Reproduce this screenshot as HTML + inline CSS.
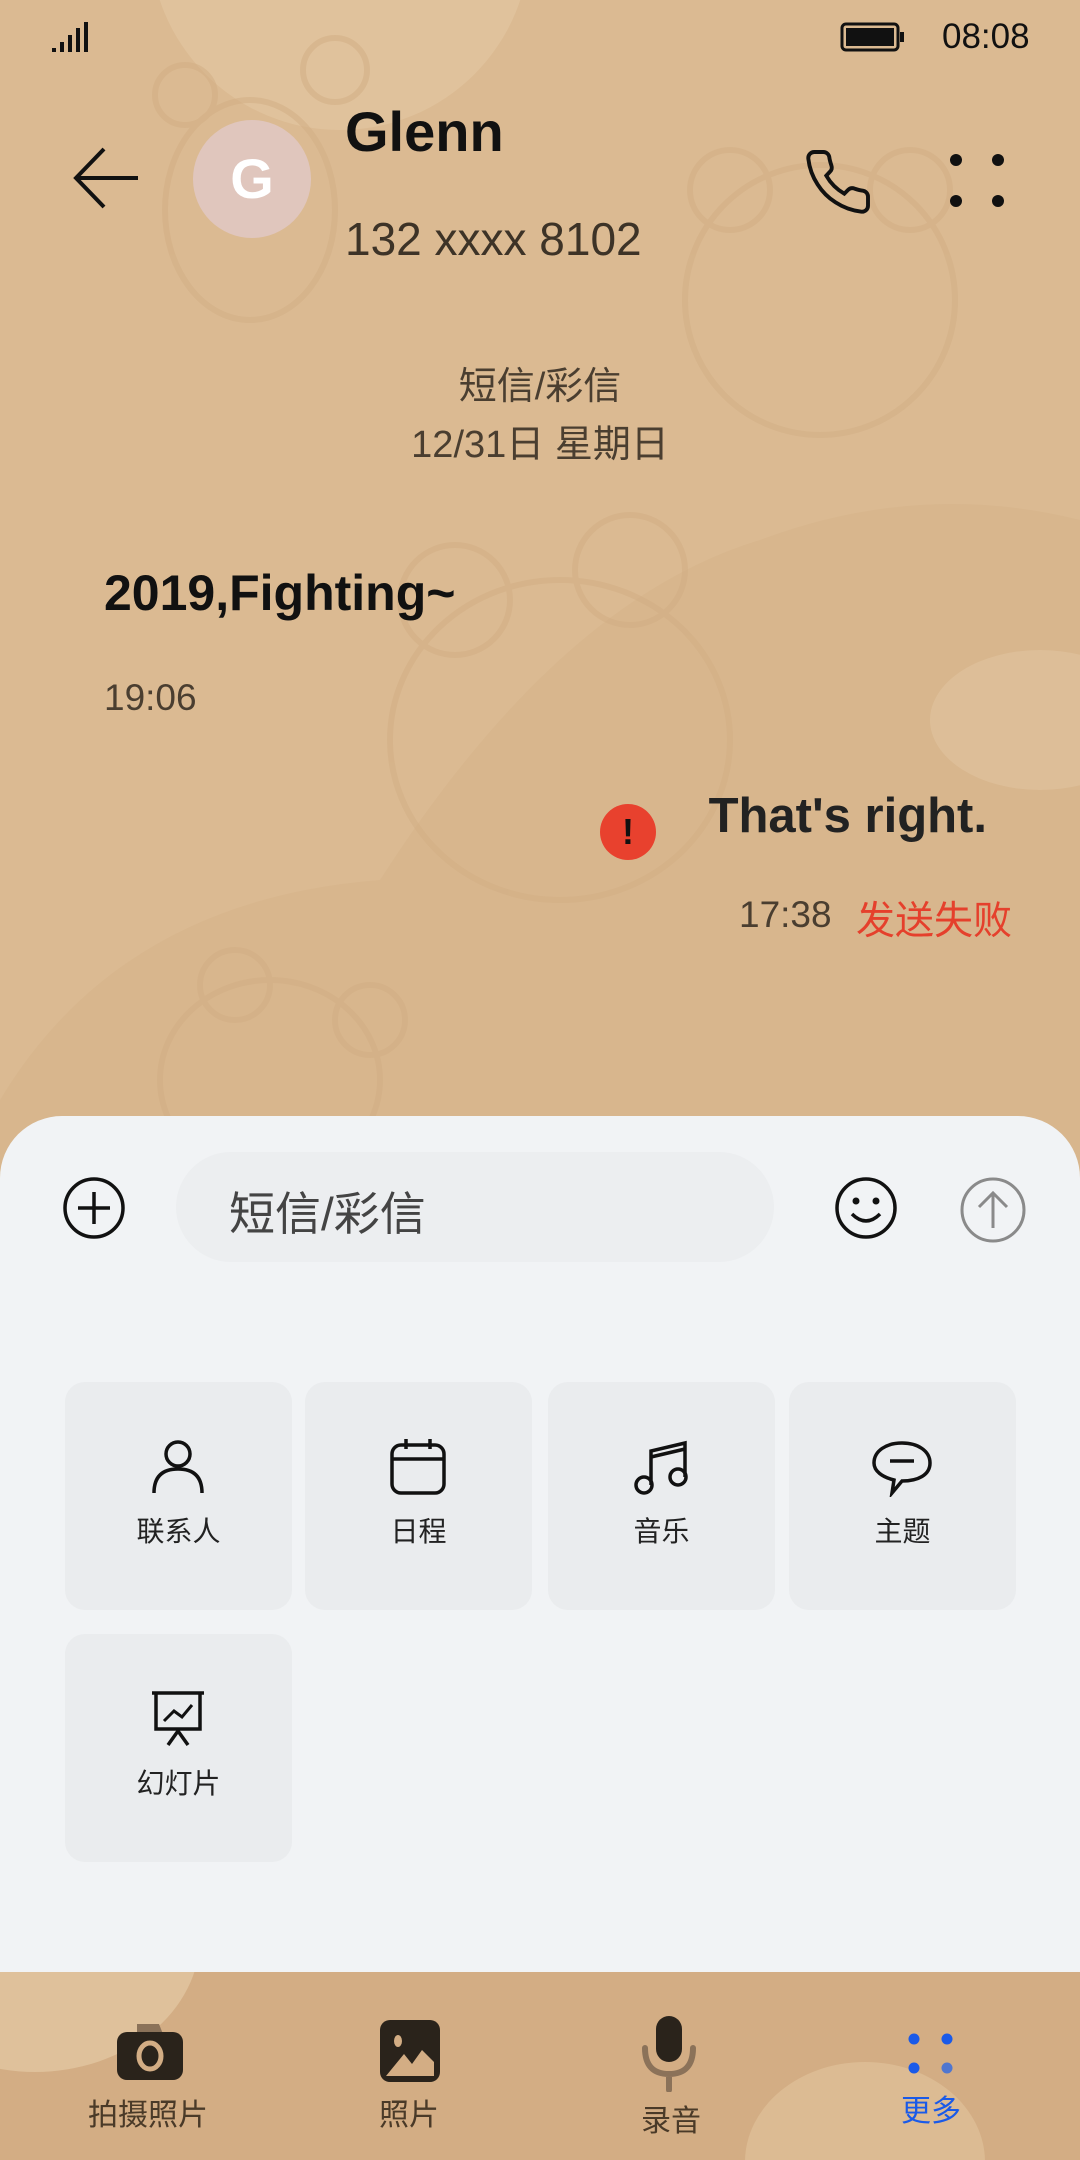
<!DOCTYPE html>
<html><head><meta charset="utf-8"><style>
*{margin:0;padding:0;box-sizing:border-box}
body{width:1080px;height:2160px;position:relative;overflow:hidden;background:#dbba92;font-family:"Liberation Sans","Noto Sans CJK SC",sans-serif;color:#111}
.a{position:absolute}
.t{position:absolute;white-space:nowrap}
.tile{position:absolute;width:227px;height:228px;background:#eaecee;border-radius:20px}
.tile span{position:absolute;left:0;right:0;top:128px;text-align:center;font-size:28px;color:#222}
.tile svg{position:absolute;left:83px;top:55px}
.bl{position:absolute;font-size:30px;color:#4a3a28;text-align:center;width:200px}
</style></head><body>
<svg class="a" style="left:0;top:0" width="1080" height="1200">
<circle cx="340" cy="-60" r="190" fill="#e0c29c"/>
<path d="M0 1100 Q120 900 380 880 Q560 600 760 540 Q920 480 1080 520 L1080 1200 L0 1200Z" fill="#d6b48a" opacity=".6"/>
<g fill="none" stroke="#d2ae84" stroke-width="6" opacity=".5">
<ellipse cx="250" cy="210" rx="85" ry="110"/><circle cx="185" cy="95" r="30"/><circle cx="335" cy="70" r="32"/>
<ellipse cx="820" cy="300" rx="135" ry="135"/><circle cx="730" cy="190" r="40"/><circle cx="910" cy="190" r="40"/>
<ellipse cx="560" cy="740" rx="170" ry="160"/><circle cx="455" cy="600" r="55"/><circle cx="630" cy="570" r="55"/>
<ellipse cx="270" cy="1080" rx="110" ry="100"/><circle cx="235" cy="985" r="35"/><circle cx="370" cy="1020" r="35"/>
</g>
<ellipse cx="1040" cy="720" rx="110" ry="70" fill="#e0c29c" opacity=".7"/>
</svg>
<!-- status -->
<svg class="a" style="left:52px;top:20px" width="40" height="34"><g fill="#111"><rect x="0" y="28" width="4" height="4"/><rect x="8" y="22" width="4" height="10"/><rect x="16" y="15" width="4" height="17"/><rect x="24" y="8" width="4" height="24"/><rect x="32" y="2" width="4" height="30"/></g></svg>
<svg class="a" style="left:840px;top:22px" width="66" height="30"><rect x="2" y="2" width="56" height="26" rx="4" fill="none" stroke="#111" stroke-width="3"/><rect x="6" y="6" width="48" height="18" fill="#111"/><rect x="60" y="10" width="4" height="10" fill="#111"/></svg>
<div class="t" style="left:942px;top:17px;font-size:35px;color:#111">08:08</div>
<!-- header -->
<svg class="a" style="left:70px;top:145px" width="72" height="66"><path d="M68 33H6M34 4L6 33L34 62" fill="none" stroke="#111" stroke-width="4"/></svg>
<div class="a" style="left:193px;top:120px;width:118px;height:118px;border-radius:50%;background:#e0c6bd;color:#fff;font-size:56px;font-weight:bold;text-align:center;line-height:118px">G</div>
<div class="t" style="left:345px;top:99px;font-size:56px;font-weight:bold;color:#111">Glenn</div>
<div class="t" style="left:345px;top:212px;font-size:46px;color:#3d3327">132 xxxx 8102</div>
<svg class="a" style="left:802px;top:146px" width="72" height="72" viewBox="0 0 24 24"><path d="M22 16.9v3a2 2 0 0 1-2.2 2 19.8 19.8 0 0 1-8.6-3.1 19.5 19.5 0 0 1-6-6A19.8 19.8 0 0 1 2.1 4.2 2 2 0 0 1 4.1 2h3a2 2 0 0 1 2 1.7c.1 1 .4 1.9.7 2.8a2 2 0 0 1-.5 2.1L8.1 9.9a16 16 0 0 0 6 6l1.3-1.3a2 2 0 0 1 2.1-.4c.9.3 1.8.6 2.8.7a2 2 0 0 1 1.7 2z" fill="none" stroke="#111" stroke-width="1.3"/></svg>
<svg class="a" style="left:946px;top:150px" width="64" height="62"><g fill="#111"><circle cx="10" cy="10" r="6"/><circle cx="52" cy="10" r="6"/><circle cx="10" cy="51" r="6"/><circle cx="52" cy="51" r="6"/></g></svg>
<div class="t" style="left:0;width:1080px;text-align:center;top:355px;font-size:38px;color:#4a3e30">短信/彩信</div>
<div class="t" style="left:0;width:1080px;text-align:center;top:413px;font-size:38px;color:#4a3e30">12/31日 星期日</div>
<div class="t" style="left:104px;top:564px;font-size:50px;font-weight:bold;color:#111">2019,Fighting~</div>
<div class="t" style="left:104px;top:677px;font-size:37px;color:#4a3e30">19:06</div>
<div class="a" style="left:600px;top:804px;width:56px;height:56px;border-radius:50%;background:#e8412e;color:#111;font-size:36px;text-align:center;line-height:56px;font-weight:bold">!</div>
<div class="t" style="right:93px;top:788px;font-size:49px;font-weight:bold;color:#222">That's right.</div>
<div class="t" style="left:739px;top:894px;font-size:37px;color:#4a3e30">17:38</div>
<div class="t" style="left:856px;top:890px;font-size:39px;color:#e5402c">发送失败</div>
<!-- panel -->
<div class="a" style="left:0;top:1116px;width:1080px;height:860px;background:#f1f3f5;border-radius:62px 62px 0 0"></div>
<svg class="a" style="left:62px;top:1176px" width="64" height="64"><circle cx="32" cy="32" r="29" fill="none" stroke="#111" stroke-width="3.5"/><path d="M32 16v32M16 32h32" stroke="#111" stroke-width="3.5"/></svg>
<div class="a" style="left:176px;top:1152px;width:598px;height:110px;border-radius:55px;background:#eceef0"></div>
<div class="t" style="left:229px;top:1178px;font-size:46px;color:#444">短信/彩信</div>
<svg class="a" style="left:834px;top:1176px" width="64" height="64"><circle cx="32" cy="32" r="29" fill="none" stroke="#111" stroke-width="3.5"/><circle cx="22" cy="25" r="3.5" fill="#111"/><circle cx="42" cy="25" r="3.5" fill="#111"/><path d="M18 38Q32 52 46 38" fill="none" stroke="#111" stroke-width="3.5"/></svg>
<svg class="a" style="left:959px;top:1176px" width="68" height="68"><circle cx="34" cy="34" r="31" fill="none" stroke="#8a8a8a" stroke-width="3"/><path d="M34 52V17M20 31L34 17L48 31" fill="none" stroke="#8a8a8a" stroke-width="3"/></svg>
<div class="tile" style="left:65px;top:1382px"><svg width="60" height="60"><circle cx="30" cy="17" r="12" fill="none" stroke="#111" stroke-width="3.5"/><path d="M6 56Q6 32 30 32Q54 32 54 56" fill="none" stroke="#111" stroke-width="3.5"/></svg><span>联系人</span></div>
<div class="tile" style="left:305px;top:1382px"><svg width="60" height="60"><rect x="4" y="8" width="52" height="48" rx="9" fill="none" stroke="#111" stroke-width="3.5"/><path d="M4 22H56M18 2V12M42 2V12" stroke="#111" stroke-width="3.5"/></svg><span>日程</span></div>
<div class="tile" style="left:548px;top:1382px"><svg width="60" height="60"><path d="M20 48V14L54 6V40" fill="none" stroke="#111" stroke-width="3.5"/><path d="M20 20L54 12" stroke="#111" stroke-width="3.5"/><circle cx="13" cy="48" r="8" fill="none" stroke="#111" stroke-width="3.5"/><circle cx="47" cy="40" r="8" fill="none" stroke="#111" stroke-width="3.5"/></svg><span>音乐</span></div>
<div class="tile" style="left:789px;top:1382px"><svg width="60" height="60"><path d="M30 6C46 6 58 14 58 26C58 38 46 44 30 44L20 56L22 43C10 40 2 34 2 26C2 14 14 6 30 6Z" fill="none" stroke="#111" stroke-width="3.5"/><path d="M18 24H42" stroke="#111" stroke-width="3.5"/></svg><span>主题</span></div>
<div class="tile" style="left:65px;top:1634px"><svg width="60" height="60"><path d="M4 4H56M8 4V40H52V4M20 56L30 42L40 56" fill="none" stroke="#111" stroke-width="3.5"/><path d="M16 32L26 22L34 28L44 16" fill="none" stroke="#111" stroke-width="3"/></svg><span>幻灯片</span></div>
<!-- bottom bar -->
<div class="a" style="left:0;top:1972px;width:1080px;height:188px;background:#d3ad84;overflow:hidden">
<div class="a" style="left:-130px;top:-170px;width:330px;height:270px;border-radius:50%;background:#dfc19b"></div>
<div class="a" style="left:745px;top:90px;width:240px;height:200px;border-radius:50%;background:#dcbb93"></div>
</div>
<svg class="a" style="left:115px;top:2024px" width="70" height="56"><path d="M22 0H44L48 10H22Z" fill="#8b7259"/><rect x="2" y="8" width="66" height="48" rx="10" fill="#2a231b"/><ellipse cx="35" cy="32" rx="11" ry="13" fill="none" stroke="#d3ad84" stroke-width="5"/></svg>
<svg class="a" style="left:380px;top:2020px" width="60" height="62"><rect x="0" y="0" width="60" height="62" rx="10" fill="#2a231b"/><ellipse cx="18" cy="21" rx="4" ry="6" fill="#d3ad84"/><path d="M6 56L24 34L32 44L42 30L54 42V56Z" fill="#d3ad84"/></svg>
<svg class="a" style="left:642px;top:2016px" width="56" height="76"><rect x="14" y="0" width="26" height="46" rx="13" fill="#2a231b"/><path d="M3 32Q3 58 27 58Q51 58 51 32M27 58V74" fill="none" stroke="#8b7259" stroke-width="6" stroke-linecap="round"/></svg>
<svg class="a" style="left:906px;top:2030px" width="50" height="50"><circle cx="8" cy="9" r="5.5" fill="#1a5ae8"/><circle cx="41" cy="9" r="5.5" fill="#1a5ae8"/><circle cx="8" cy="38" r="5.5" fill="#1a5ae8"/><circle cx="41" cy="38" r="5.5" fill="#4f76d0"/></svg>
<div class="bl" style="left:48px;top:2090px">拍摄照片</div>
<div class="bl" style="left:309px;top:2090px">照片</div>
<div class="bl" style="left:571px;top:2096px">录音</div>
<div class="bl" style="left:831px;top:2086px;color:#1a5ae8">更多</div>
</body></html>
